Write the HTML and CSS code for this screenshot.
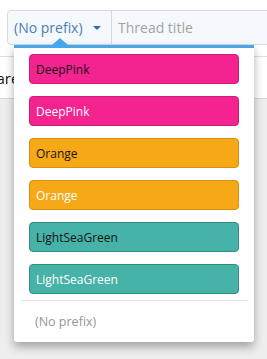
FILE: index.html
```html
<!DOCTYPE html>
<html lang="en">
<head>
<meta charset="utf-8">
<title>Prefix menu</title>
<link rel="stylesheet" href="styles.css">
</head>
<body>
<div class="page">
  <div class="top">
    <div class="input-group">
      <div class="prefix-btn">
        <span class="prefix-text">(No prefix)</span>
        <span class="caret"></span>
      </div>
      <div class="title-input">Thread title</div>
    </div>
  </div>
  <div class="row"><span class="row-text">Share</span></div>
  <div class="gray"></div>

  <div class="menu">
    <span class="menu-arrow"></span>
    <div class="menu-list">
      <div class="label pink dark">DeepPink</div>
      <div class="label pink light">DeepPink</div>
      <div class="label orange dark">Orange</div>
      <div class="label orange light">Orange</div>
      <div class="label teal dark">LightSeaGreen</div>
      <div class="label teal light">LightSeaGreen</div>
    </div>
    <div class="menu-sep"></div>
    <div class="menu-footer">(No prefix)</div>
  </div>
</div>
</body>
</html>
```

FILE: styles.css
```css
html, body {
  margin: 0;
  padding: 0;
  height: 100%;
}
body {
  font-family: "Open Sans", "Noto Sans", sans-serif;
  background: #eeeeee;
}
.page {
  position: relative;
  height: 100%;
  overflow: hidden;
  display: flex;
  flex-direction: column;
}
.top {
  background: #fff;
  padding: 10px 0 11px 7px;
}
.input-group {
  display: flex;
  width: 320px;
  height: 35px;
  box-sizing: border-box;
  border: 1px solid #d8d8d8;
  border-radius: 4px;
  background: #f5f9fd;
}
.prefix-btn {
  display: flex;
  align-items: center;
  gap: 10px;
  width: 104px;
  box-sizing: border-box;
  padding: 0 0 0 6px;
  border-right: 1px solid #d8d8d8;
  font-size: 14px;
  color: #4a7db6;
}
.caret {
  width: 0;
  height: 0;
  border-left: 4px solid transparent;
  border-right: 4px solid transparent;
  border-top: 4px solid #2f6db1;
}
.title-input {
  display: flex;
  align-items: center;
  padding-left: 6px;
  font-size: 14px;
  color: #a3a3a3;
}
.row {
  height: 41px;
  border-top: 1px solid #dfdfdf;
  background: #fff;
  display: flex;
  align-items: center;
}
.row-text {
  margin-left: -21px;
  font-size: 15px;
  color: #141414;
}
.gray {
  flex: 1;
  border-top: 1px solid #d6d6d6;
  background: #eeeeee;
}
.menu {
  position: absolute;
  left: 14px;
  top: 45px;
  width: 240px;
  height: 297px;
  box-sizing: border-box;
  background: #fff;
  border-top: 3px solid #47a7eb;
  border-radius: 0 0 3px 3px;
  box-shadow: 0 5px 10px 0 rgba(0, 0, 0, 0.32);
}
.menu-arrow {
  position: absolute;
  left: 38px;
  top: -10px;
  width: 0;
  height: 0;
  border-left: 8px solid transparent;
  border-right: 8px solid transparent;
  border-bottom: 7px solid #47a7eb;
}
.menu-list {
  display: flex;
  flex-direction: column;
  gap: 12px;
  padding: 6px 15px;
}
.label {
  height: 30px;
  box-sizing: border-box;
  display: flex;
  align-items: center;
  padding: 0 6px;
  border: 1px solid;
  border-radius: 4px;
  font-size: 12px;
}
.label.dark { color: #141414; }
.label.light { color: #ffffff; }
.pink { background: #f3238f; border-color: #d01a7a; }
.orange { background: #f6a817; border-color: #d69012; }
.teal { background: #47b2a8; border-color: #2f8d84; }
.menu-sep {
  height: 1px;
  margin: 0 7px;
  background: #e0e0e0;
}
.menu-footer {
  padding: 12px 21px 0;
  font-size: 12.5px;
  color: #969696;
}
```
